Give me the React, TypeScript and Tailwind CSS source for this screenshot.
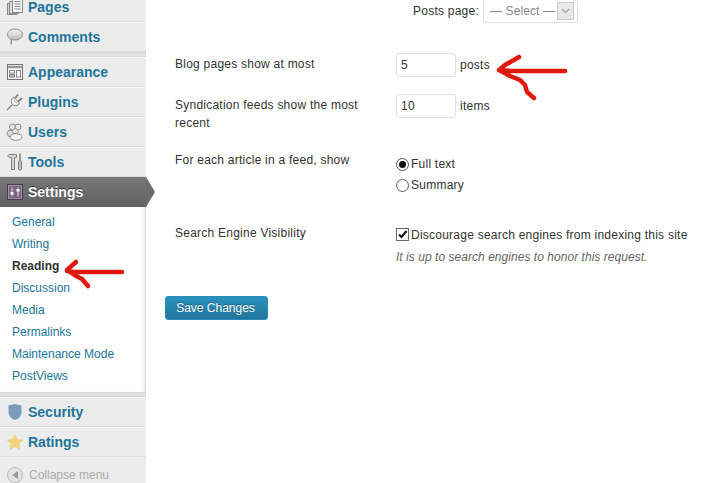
const font = "font-['Liberation_Sans',Arial,sans-serif]";

function Pages() {
  return (
    <svg width="18" height="18" viewBox="0 0 18 18" fill="none" stroke="#8a8a8a">
      <rect x="1.500" y="5.500" width="9" height="11" fill="#cfcfcf" />
      <rect x="3.500" y="3.500" width="9" height="12" fill="#dedede" />
      <rect x="6.500" y="0.500" width="10" height="14" fill="#f4f4f4" />
      <path d="M8.500 3.500h6M8.500 6h6M8.500 8.500h6M8.500 11h6" stroke="#8f8f8f" />
    </svg>
  );
}
function Comments() {
  return (
    <svg width="18" height="18" viewBox="0 0 18 18" fill="none">
      <defs>
        <linearGradient id="bubble" x1="0" y1="0" x2="0" y2="1">
          <stop offset="0" stopColor="#fafafa" />
          <stop offset="1" stopColor="#b9b9b9" />
        </linearGradient>
      </defs>
      <path d="M5.500 11L5 16.500" stroke="#888" strokeWidth="1.300" />
      <ellipse cx="9" cy="6.500" rx="7.500" ry="5.500" fill="url(#bubble)" stroke="#8c8c8c" />
    </svg>
  );
}
function Appearance() {
  return (
    <svg width="16" height="16" viewBox="0 0 16 16" fill="none" stroke="#777">
      <rect x="0.500" y="0.500" width="15" height="15" fill="#f4f4f4" />
      <path d="M1 3h14" stroke="#9a9a9a" strokeWidth="2.500" />
      <rect x="2.500" y="6.500" width="5" height="2.500" fill="#fff" stroke="#888" />
      <rect x="2.500" y="10.500" width="5" height="2.500" fill="#bbb" stroke="#888" />
      <rect x="9.500" y="6.500" width="4" height="6.500" fill="#fff" stroke="#888" />
    </svg>
  );
}
function Plugins() {
  return (
    <svg width="18" height="18" viewBox="0 0 18 18" fill="none" stroke="#7f7f7f">
      <path d="M7.500 4L13.500 10C12 13 8.500 13.500 6.500 11.500C4.500 9.500 5 6 7.500 4Z" fill="#f2f2f2" />
      <path d="M9 5.500L12 1.500M12 8.500L16 5" strokeWidth="1.800" />
      <path d="M6 12L1 17" strokeWidth="1.300" />
      <path d="M8 7.500L11 10" stroke="#aaa" />
    </svg>
  );
}
function Users() {
  return (
    <svg width="18" height="18" viewBox="0 0 18 18" fill="none" stroke="#8a8a8a">
      <circle cx="6.500" cy="4" r="3" fill="#e8e8e8" />
      <circle cx="12" cy="4" r="3" fill="#e8e8e8" />
      <ellipse cx="5" cy="10.500" rx="3.800" ry="3.300" fill="#ddd" />
      <circle cx="9.500" cy="8.500" r="2.800" fill="#f6f6f6" />
      <ellipse cx="10" cy="14" rx="6" ry="3.300" fill="#f6f6f6" />
    </svg>
  );
}
function Tools() {
  return (
    <svg width="16" height="18" viewBox="0 0 16 18" fill="none" stroke="#808080">
      <path d="M0.500 3L2 1.500H9.500V4.500H7.500V16.500H4.500V4.500H2.500Z" fill="#d4d4d4" />
      <path d="M13 0.500V7" strokeWidth="1.600" />
      <rect x="11.500" y="7.500" width="3" height="9.500" rx="1.200" fill="#bdbdbd" />
    </svg>
  );
}
function SettingsIcon() {
  return (
    <svg width="16" height="16" viewBox="0 0 16 16" fill="none">
      <rect x="0.500" y="0.500" width="15" height="15" fill="#7d6283" stroke="#3f3f3f" />
      <rect x="1.500" y="1.500" width="13" height="13" stroke="#a391a6" />
      <path d="M5 3.500v9M11 3.500v9" stroke="#e8dde9" />
      <rect x="3.500" y="8" width="3" height="2.500" fill="#fff" />
      <rect x="9.500" y="5" width="3" height="2.500" fill="#fff" />
    </svg>
  );
}
function Shield() {
  return (
    <svg width="14" height="16" viewBox="0 0 14 16">
      <path d="M7 0L13.500 1.500V8C13.500 12 10.500 15 7 16C3.500 15 0.500 12 0.500 8V1.500Z" fill="#7b9cba" />
    </svg>
  );
}
function Star() {
  return (
    <svg width="16" height="16" viewBox="0 0 16 16">
      <path d="M8 0.500L10.300 5.500L15.800 6.100L11.700 9.800L12.900 15.300L8 12.500L3.100 15.300L4.300 9.800L0.200 6.100L5.700 5.500Z" fill="#f2d67d" stroke="#e6c667" strokeWidth="0.500" />
    </svg>
  );
}

function MenuRow({ icon, label }: { icon: React.ReactNode; label: string }) {
  return (
    <div className="flex h-[30px] items-center border-t border-t-[#f8f8f8] border-b border-b-[#dfdfdf] bg-[#ececec]">
      <span className="flex w-[28px] shrink-0 justify-center pl-[1px]">{icon}</span>
      <span className="text-[14px] font-bold text-[#21759b]">{label}</span>
    </div>
  );
}

const subItems = ["General", "Writing", "Reading", "Discussion", "Media", "Permalinks", "Maintenance Mode", "PostViews"];

function Sidebar() {
  return (
    <aside className="relative -mt-[8px] w-[146px] shrink-0 bg-[#ececec] shadow-[inset_-4px_0_4px_-3px_#bbb]">
      <MenuRow icon={<Pages />} label="Pages" />
      <MenuRow icon={<Comments />} label="Comments" />
      <div className="h-[5px] border-y border-[#d8d8d8] bg-[#e2e2e2]" />
      <MenuRow icon={<Appearance />} label="Appearance" />
      <MenuRow icon={<Plugins />} label="Plugins" />
      <MenuRow icon={<Users />} label="Users" />
      <MenuRow icon={<Tools />} label="Tools" />
      <div className="relative flex h-[30px] items-center bg-gradient-to-b from-[#777] to-[#626262]">
        <span className="flex w-[28px] shrink-0 justify-center pl-[1px]"><SettingsIcon /></span>
        <span className="text-[14px] font-bold text-white [text-shadow:0_-1px_0_#333]">Settings</span>
        <span className="absolute left-[146px] top-0 h-0 w-0 border-y-[15px] border-l-[9px] border-y-transparent border-l-[#6b6b6b]" />
      </div>
      <ul className="flex flex-col bg-white py-[4px] pb-[5px] shadow-[inset_-4px_0_4px_-3px_#ccc]">
        {subItems.map((s) => (
          <li
            key={s}
            className={`flex h-[22px] items-center pl-[12px] text-[12px] ${s === "Reading" ? "font-bold text-[#333]" : "text-[#21759b]"}`}
          >
            {s}
          </li>
        ))}
      </ul>
      <div className="h-[5px] border-y border-[#d8d8d8] bg-[#e2e2e2]" />
      <MenuRow icon={<Shield />} label="Security" />
      <MenuRow icon={<Star />} label="Ratings" />
      <div className="flex h-[36px] items-start bg-[#ececec] pt-[10px]">
        <span className="flex w-[29px] shrink-0 justify-center">
          <span className="flex h-[16px] w-[16px] items-center justify-center rounded-full border border-[#bbb] bg-[#e4e4e4]">
            <span className="h-0 w-0 border-y-[4px] border-r-[6px] border-y-transparent border-r-[#999]" />
          </span>
        </span>
        <span className="text-[12px] leading-[16px] text-[#aaa]">Collapse menu</span>
      </div>
    </aside>
  );
}

function Row({ label, className, children }: { label: React.ReactNode; className: string; children: React.ReactNode }) {
  return (
    <div className={`flex ${className}`}>
      <div className="w-[221px] shrink-0 pr-[30px] leading-[18px]">{label}</div>
      <div>{children}</div>
    </div>
  );
}

function NumberInput({ value }: { value: string }) {
  return (
    <span className="flex h-[24px] w-[60px] items-center rounded-[3px] border border-[#dfdfdf] bg-white pl-[4px] text-[#333]">
      {value}
    </span>
  );
}

function Main() {
  return (
    <main className="min-w-0 flex-1 pl-[29px] text-[12px] tracking-[0.24px] text-[#333]">
      <div className="-mt-[1px] flex items-center pl-[238px]">
        <span className="mr-[4px] whitespace-nowrap">Posts page:</span>
        <span className="flex h-[24px] w-[95px] items-center justify-between rounded-[3px] border border-[#dfdfdf] bg-white pl-[6px] pr-[3px] tracking-[0.1px] text-[#888]">
          — Select —
          <span className="flex h-[18px] w-[17px] items-center justify-center border border-[#ccc] bg-[#e8e8e8]">
            <svg width="9" height="6" viewBox="0 0 9 6" fill="none" stroke="#aaa" strokeWidth="1.500"><path d="M1 1l3.500 3.500L8 1" /></svg>
          </span>
        </span>
      </div>
      <Row label="Blog pages show at most" className="pt-[32px]">
        <div className="-mt-[2px] flex items-center gap-[4px]"><NumberInput value="5" /> posts</div>
      </Row>
      <Row label="Syndication feeds show the most recent" className="pt-[19px]">
        <div className="-mt-[2px] flex items-center gap-[4px]"><NumberInput value="10" /> items</div>
      </Row>
      <Row label="For each article in a feed, show" className="pt-[19px]">
        <div className="flex flex-col gap-[5px] pt-[5px]">
          <label className="flex h-[16px] items-center gap-[2px]">
            <span className="flex h-[13px] w-[13px] items-center justify-center rounded-full border border-[#555] bg-white">
              <span className="h-[7px] w-[7px] rounded-full bg-[#111]" />
            </span>
            Full text
          </label>
          <label className="flex h-[16px] items-center gap-[2px]">
            <span className="h-[13px] w-[13px] rounded-full border border-[#666] bg-white" />
            Summary
          </label>
        </div>
      </Row>
      <Row label="Search Engine Visibility" className="pt-[31px]">
        <div className="mt-[1px] flex h-[18px] items-center gap-[2px] whitespace-nowrap pt-[1px]">
          <span className="flex h-[13px] w-[13px] items-center justify-center border border-[#666] bg-white">
            <svg width="11" height="11" viewBox="0 0 11 11" fill="none" stroke="#111" strokeWidth="2"><path d="M2 5.500l2.500 2.500L9.500 2" /></svg>
          </span>
          Discourage search engines from indexing this site
        </div>
        <p className="mt-[5px] italic leading-[18px] tracking-[0.04px] text-[#666]">It is up to search engines to honor this request.</p>
      </Row>
      <div className="-ml-[10px] pt-[30px]">
        <button className="h-[24px] w-[103px] rounded-[3px] border border-[#298cba] bg-gradient-to-b from-[#2a93bf] to-[#21759b] pr-[2px] text-[12px] tracking-normal text-white [text-shadow:0_-1px_0_rgba(0,0,0,0.3)]">
          Save Changes
        </button>
      </div>
    </main>
  );
}

export default function App() {
  return (
    <div className={`relative flex h-[483px] w-[701px] overflow-hidden bg-white ${font}`}>
      <Sidebar />
      <Main />
      <svg className="pointer-events-none absolute left-0 top-0" width="701" height="483" fill="none" stroke="#df1a0d" strokeLinecap="round" strokeLinejoin="round">
        <path d="M122 272H74L67 271M76 262L67 270L76 276L82 279L88 286" strokeWidth="4.500" />
        <path d="M565 71H513L499 70M519 57L505 65L499 70L510 76L520 80L525 85L527 92L534 98" strokeWidth="4.500" />
      </svg>
    </div>
  );
}
